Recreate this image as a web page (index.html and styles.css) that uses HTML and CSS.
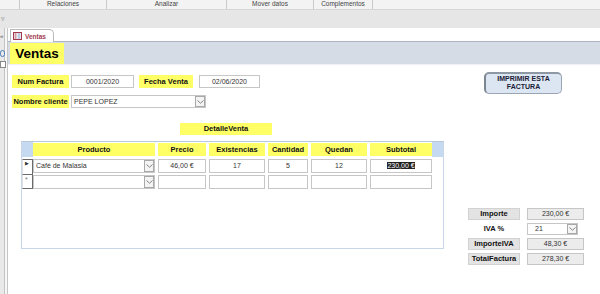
FILE: index.html
```html
<!DOCTYPE html>
<html lang="es">
<head>
    <meta charset="UTF-8">
    <title>Ventas</title>
    <link rel="stylesheet" href="styles.css">
</head>
<body>
    <!-- cinta de opciones -->
    <div class="ribbon-tabs">
        <span class="rtab rtab-first"></span>
        <span class="rtab rtab-rel">Relaciones</span>
        <span class="rtab rtab-ana">Analizar</span>
        <span class="rtab rtab-mov">Mover datos</span>
        <span class="rtab rtab-com">Complementos</span>
    </div>
    <div class="ribbon-band">
        <span class="band-arrow">&#9663;</span>
    </div>

    <div class="workspace">
        <!-- panel de navegacion (plegado) -->
        <div class="navpane">
            <span class="nav-icon nav-chev">&laquo;</span>
            <span class="nav-icon nav-round"></span>
            <span class="nav-icon nav-square"></span>
        </div>

        <div class="doc">
            <div class="doctabs">
                <div class="doctab">
                    <svg class="tab-icon" width="9" height="8" viewBox="0 0 9 8">
                        <rect x="0.5" y="0.5" width="8" height="7" fill="#fff" stroke="#a33b4f"/>
                        <rect x="1.5" y="1.5" width="2" height="1" fill="#a33b4f"/>
                        <rect x="4.5" y="1.5" width="3" height="1" fill="#7f9cc4"/>
                        <rect x="1.5" y="3.5" width="2" height="1" fill="#a33b4f"/>
                        <rect x="4.5" y="3.5" width="3" height="1" fill="#7f9cc4"/>
                        <rect x="1.5" y="5.5" width="2" height="1" fill="#a33b4f"/>
                        <rect x="4.5" y="5.5" width="3" height="1" fill="#7f9cc4"/>
                    </svg>
                    <span>Ventas</span>
                </div>
            </div>

            <!-- encabezado del formulario -->
            <div class="form-header">
                <h1 class="title">Ventas</h1>
            </div>

            <!-- detalle del formulario -->
            <div class="form-body">
                <div class="top">
                    <div class="fields">
                        <div class="field-row">
                            <span class="lbl lbl-num">Num Factura</span>
                            <span class="txt txt-num">0001/2020</span>
                            <span class="lbl lbl-fecha">Fecha Venta</span>
                            <span class="txt txt-fecha">02/06/2020</span>
                        </div>
                        <div class="field-row">
                            <span class="lbl lbl-num">Nombre cliente</span>
                            <span class="combo combo-cli">
                                <span class="combo-val">PEPE LOPEZ</span>
                                <span class="drop"><svg width="7" height="4" viewBox="0 0 7 4"><path d="M0.5 0.5 L3.5 3.2 L6.5 0.5" fill="none" stroke="#777" stroke-width="0.9"/></svg></span>
                            </span>
                        </div>
                    </div>
                    <div class="print-btn">IMPRIMIR ESTA<br>FACTURA</div>
                </div>

                <div class="detail-row">
                    <div class="detail">
                        <div class="detail-title">DetalleVenta</div>
                        <div class="subform">
                            <div class="sf-head">
                                <span class="sel-head"></span>
                                <span class="hlbl c-prod">Producto</span>
                                <span class="hlbl c-prec">Precio</span>
                                <span class="hlbl c-exis">Existencias</span>
                                <span class="hlbl c-cant">Cantidad</span>
                                <span class="hlbl c-qued">Quedan</span>
                                <span class="hlbl c-sub">Subtotal</span>
                                <span class="head-fill"></span>
                            </div>
                            <div class="records">
                                <div class="rec">
                                    <span class="sel sel-cur">&#9654;</span>
                                    <span class="combo c-prod">
                                        <span class="combo-val">Café de Malasia</span>
                                        <span class="drop"><svg width="7" height="4" viewBox="0 0 7 4"><path d="M0.5 0.5 L3.5 3.2 L6.5 0.5" fill="none" stroke="#777" stroke-width="0.9"/></svg></span>
                                    </span>
                                    <span class="txt c-prec">46,00 €</span>
                                    <span class="txt c-exis">17</span>
                                    <span class="txt c-cant">5</span>
                                    <span class="txt c-qued">12</span>
                                    <span class="txt c-sub"><span class="hl">230,00 €</span></span>
                                </div>
                                <div class="rec">
                                    <span class="sel sel-new">*</span>
                                    <span class="combo c-prod">
                                        <span class="combo-val"></span>
                                        <span class="drop"><svg width="7" height="4" viewBox="0 0 7 4"><path d="M0.5 0.5 L3.5 3.2 L6.5 0.5" fill="none" stroke="#777" stroke-width="0.9"/></svg></span>
                                    </span>
                                    <span class="txt c-prec"></span>
                                    <span class="txt c-exis"></span>
                                    <span class="txt c-cant"></span>
                                    <span class="txt c-qued"></span>
                                    <span class="txt c-sub"></span>
                                </div>
                            </div>
                        </div>
                    </div>

                    <!-- totales -->
                    <div class="totals">
                        <span class="tlbl">Importe</span>
                        <span class="tval">230,00 €</span>
                        <span class="tlbl tlbl-plain">IVA %</span>
                        <span class="combo combo-iva">
                            <span class="combo-val">21</span>
                            <span class="drop"><svg width="7" height="4" viewBox="0 0 7 4"><path d="M0.5 0.5 L3.5 3.2 L6.5 0.5" fill="none" stroke="#777" stroke-width="0.9"/></svg></span>
                        </span>
                        <span class="tlbl">ImporteIVA</span>
                        <span class="tval">48,30 €</span>
                        <span class="tlbl">TotalFactura</span>
                        <span class="tval">278,30 €</span>
                    </div>
                </div>
            </div>
        </div>
    </div>
</body>
</html>
```

FILE: styles.css
```css
body
{
    margin: 0;
    padding: 0;
    width: 600px;
    height: 294px;
    overflow: hidden;
    font-family: "Liberation Sans", Arial, sans-serif;
    color: #333;
    background: #fff;
}

/* cinta de opciones */
.ribbon-tabs
{
    display: flex;
    height: 9px;
    background: #f3f3f3;
    overflow: hidden;
}

.rtab
{
    flex-shrink: 0;
    height: 9px;
    border-right: 1px solid #c9c9c9;
    font-size: 6.5px;
    line-height: 8px;
    color: #444;
    text-align: center;
}

.rtab-first { width: 19px; }
.rtab-rel   { width: 86px; }
.rtab-ana   { width: 119px; }
.rtab-mov   { width: 86px; }
.rtab-com   { width: 58px; }

.ribbon-band
{
    height: 18px;
    background: #e6e6e6;
    border-top: 1px solid #d6d6d6;
}

.band-arrow
{
    display: block;
    padding: 5px 0 0 1px;
    font-size: 7px;
    line-height: 7px;
    color: #777;
}

/* espacio de trabajo */
.workspace
{
    display: flex;
    height: 266px;
}

.navpane
{
    flex-shrink: 0;
    width: 8px;
    background: linear-gradient(to right, #e9e9e9 0, #e9e9e9 4px, #c3c3c3 4px, #c3c3c3 5px, #f7f7f7 5px, #f7f7f7 7px, #c6c6c6 7px);
    display: flex;
    flex-direction: column;
    overflow: hidden;
}

.nav-icon
{
    display: block;
    width: 5px;
}

.nav-chev
{
    margin-top: 5px;
    font-size: 6px;
    line-height: 7px;
    color: #555;
}

.nav-round
{
    margin-top: 10px;
    height: 5px;
    border: 1px solid #4a7ebb;
    border-radius: 3px;
    width: 3px;
}

.nav-square
{
    margin-top: 4px;
    height: 5px;
    width: 4px;
    border: 1px solid #888;
    background: #fff;
}

.doc
{
    flex: 1;
    min-width: 0;
    display: flex;
    flex-direction: column;
}

/* pestaña del documento */
.doctabs
{
    height: 13px;
    background: #fff;
    border-bottom: 1px solid #aab4c3;
    display: flex;
    align-items: flex-end;
}

.doctab
{
    margin-left: 2px;
    width: 40px;
    height: 12px;
    border: 1px solid #b9b9b9;
    border-bottom: none;
    border-top-right-radius: 5px;
    background: #fff;
    display: flex;
    align-items: center;
    gap: 3px;
    padding-left: 2px;
    font-size: 6.5px;
    font-weight: bold;
    color: #a33b4f;
    margin-bottom: -1px;
}

.tab-icon
{
    display: block;
}

/* encabezado */
.form-header
{
    height: 22px;
    background: #d6dce5;
    padding-left: 2px;
    border-bottom: 1px solid #eef1f5;
}

.title
{
    margin: 1px 0 0 0;
    width: 54px;
    height: 21px;
    background: #ffff66;
    font-size: 13.5px;
    line-height: 21px;
    font-weight: bold;
    color: #000;
    text-align: center;
}

/* cuerpo del formulario */
.form-body
{
    padding: 7px 38px 0 4px;
}

.top
{
    display: flex;
    align-items: flex-start;
}

.fields
{
    margin-top: 3px;
    display: flex;
    flex-direction: column;
    gap: 7px;
}

.field-row
{
    display: flex;
    height: 13px;
}

.lbl
{
    height: 13px;
    background: #ffff66;
    font-size: 7.5px;
    line-height: 13px;
    font-weight: bold;
    color: #111;
    text-align: center;
}

.lbl-num   { width: 57px; margin-right: 2px; }
.lbl-fecha { width: 54px; margin: 0 6px 0 5px; }

.txt
{
    box-sizing: border-box;
    height: 13px;
    border: 1px solid #c6c6c6;
    background: #fff;
    font-size: 7px;
    line-height: 11px;
    color: #333;
    text-align: center;
    white-space: nowrap;
    overflow: hidden;
}

.txt-num   { width: 63px; }
.txt-fecha { width: 61px; }

.combo
{
    box-sizing: border-box;
    height: 13px;
    border: 1px solid #c6c6c6;
    background: #fff;
    display: flex;
    font-size: 7px;
    line-height: 11px;
    color: #333;
}

.combo-val
{
    flex: 1;
    padding-left: 2px;
    white-space: nowrap;
    overflow: hidden;
}

.drop
{
    box-sizing: border-box;
    width: 10px;
    border: 1px solid #a8a8a8;
    background: #f4f4f4;
    display: flex;
    align-items: center;
    justify-content: center;
}

.combo-cli { width: 135px; }

.print-btn
{
    margin: 0 0 0 auto;
    box-sizing: border-box;
    width: 78px;
    height: 22px;
    border-radius: 5px;
    border: 1px solid #9aa6b4;
    border-left: 2px solid #7b8693;
    border-top: 2px solid #8e98a4;
    background: #dce6f2;
    font-size: 7px;
    line-height: 8px;
    padding-top: 1px;
    font-weight: bold;
    color: #1c1c38;
    text-align: center;
}

/* subformulario */
.detail-row
{
    display: flex;
    margin-top: 15px;
}

.detail
{
    margin-left: 9px;
    width: 423px;
    flex-shrink: 0;
}

.detail-title
{
    margin-left: 159px;
    width: 92px;
    height: 12px;
    background: #ffff66;
    font-size: 7.5px;
    line-height: 12px;
    font-weight: bold;
    color: #111;
    text-align: center;
}

.subform
{
    margin-top: 6px;
    box-sizing: border-box;
    height: 108px;
    border: 1px solid #c9d5e8;
    border-top-color: #b8c8e0;
    background: #fff;
}

.sf-head
{
    display: flex;
    height: 15px;
}

.sel-head
{
    width: 11px;
    background: #c5d9f1;
}

.head-fill
{
    flex: 1;
    background: #c5d9f1;
}

.hlbl
{
    margin-top: 1px;
    height: 12.5px;
    background: #ffff66;
    font-size: 7.5px;
    line-height: 13px;
    font-weight: bold;
    color: #111;
    text-align: center;
}

.c-prod { width: 122px; }
.c-prec { width: 48px; margin-left: 3px; }
.c-exis { width: 56px; margin-left: 3px; }
.c-cant { width: 40px; margin-left: 3px; }
.c-qued { width: 56px; margin-left: 3px; }
.c-sub  { width: 62px; margin-left: 3px; }

.records
{
    margin-top: 2px;
}

.rec
{
    display: flex;
    height: 16px;
}

.rec .txt,
.rec .combo
{
    height: 14px;
    line-height: 12px;
}

.sel
{
    box-sizing: border-box;
    width: 11px;
    height: 16px;
    border-left: 1px solid #e0e0e0;
    border-right: 1px solid #6b6b6b;
    border-bottom: 1px solid #6b6b6b;
    background: #fff;
    color: #333;
    padding-left: 2px;
}

.sel-cur
{
    border-top: 1px solid #6b6b6b;
    font-size: 5px;
    line-height: 7px;
}

.sel-new
{
    font-size: 7px;
    line-height: 9px;
    color: #777;
    height: 14px;
}

.hl
{
    background: #222;
    color: #fff;
}

/* totales */
.totals
{
    margin: 85px 0 0 24px;
    display: grid;
    grid-template-columns: 52px 57px;
    grid-auto-rows: 12px;
    column-gap: 7px;
    row-gap: 3px;
    align-self: flex-start;
}

.tlbl
{
    box-sizing: border-box;
    background: #e3e3e3;
    border: 1px solid #d2d2d2;
    font-size: 7.5px;
    line-height: 10px;
    font-weight: bold;
    color: #111;
    text-align: center;
}

.tlbl-plain
{
    background: none;
    border-color: transparent;
}

.tval
{
    box-sizing: border-box;
    background: #ececec;
    border: 1px solid #c6c6c6;
    font-size: 7px;
    line-height: 10px;
    color: #333;
    text-align: center;
}

.combo-iva
{
    width: 51px;
    height: 12px;
    line-height: 10px;
}

.combo-iva .combo-val
{
    padding-left: 7px;
}
```
